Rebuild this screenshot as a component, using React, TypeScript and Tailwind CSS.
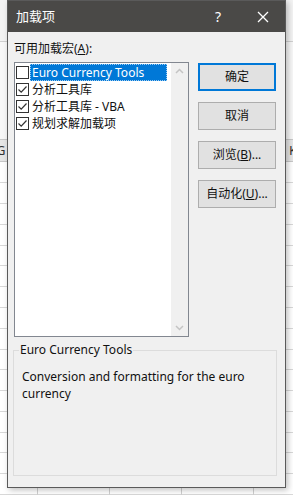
import React from 'react';

const FONT = '"Noto Sans", "Noto Sans CJK SC", sans-serif';

function Check({ checked }: { checked: boolean }) {
  return (
    <div className="w-[13px] h-[13px] border border-[#333] bg-white flex items-center justify-center shrink-0">
      {checked && (
        <svg width="11" height="11" viewBox="0 0 11 11">
          <path d="M1.5 5.5 L4.2 8.2 L9.5 2.5" fill="none" stroke="#333" strokeWidth="1.2" />
        </svg>
      )}
    </div>
  );
}

function Btn({ label, focused }: { label: React.ReactNode; focused?: boolean }) {
  return (
    <div
      className={`w-[78px] h-[28px] flex items-center justify-center text-[12px] text-[#111] ${
        focused ? 'border-2 border-[#0078d7] bg-[#e1e1e1]' : 'border border-[#adadad] bg-[#e1e1e1]'
      }`}
    >
      {label}
    </div>
  );
}

const items = [
  { label: 'Euro Currency Tools', checked: false, selected: true },
  { label: '分析工具库', checked: true },
  { label: '分析工具库 - VBA', checked: true },
  { label: '规划求解加载项', checked: true },
];

export default function App() {
  return (
    <div className="relative w-[293px] h-[495px] overflow-hidden bg-white" style={{ fontFamily: FONT }}>
      {/* spreadsheet behind the dialog */}
      <div className="absolute inset-0 flex flex-col">
        <div className="h-[42px] bg-[#f3f3f3] border-b border-[#d0d0d0]" />
        <div className="h-[98px] bg-[#f7f7f7]" />
        <div className="h-[24px] bg-[#e6e6e6] border-y border-[#c8c8c8] flex justify-between items-center text-[13px] text-[#333] px-[0px]">
          <span className="-ml-[4px]">G</span>
          <span className="-mr-[4px]">K</span>
        </div>
        {Array.from({ length: 16 }).map((_, i) => (
          <div key={i} className="h-[21px] border-b border-[#d8d8d8] bg-white" />
        ))}
      </div>
      <div className="absolute left-[37px] top-[488px] w-px h-[10px] bg-[#d0d0d0]" />
      <div className="absolute left-[109px] top-[488px] w-px h-[10px] bg-[#d0d0d0]" />
      <div className="absolute left-[181px] top-[488px] w-px h-[10px] bg-[#d0d0d0]" />
      <div className="absolute left-[253px] top-[488px] w-px h-[10px] bg-[#d0d0d0]" />

      {/* dialog */}
      <div className="absolute left-[7px] top-0 w-[279px] h-[488px] border border-[#5a5a5a] bg-[#f0f0f0] shadow-[2px_2px_6px_rgba(0,0,0,0.25)] flex flex-col">
        <div className="h-[31px] bg-[#4a4947] flex items-center text-white shrink-0">
          <span className="ml-[8px] text-[13px]">加载项</span>
          <span className="ml-auto mr-[36px] text-[14px]">?</span>
          <svg className="mr-[16px]" width="12" height="12" viewBox="0 0 12 12">
            <path d="M1 1 L11 11 M11 1 L1 11" stroke="#fff" strokeWidth="1.3" />
          </svg>
        </div>

        <div className="flex flex-col pl-[6px] pr-[7px]">
          <div className="mt-[10px] h-[14px] leading-[14px] text-[12px] text-[#111]">
            可用加载宏(<span className="underline">A</span>):
          </div>

          <div className="flex mt-[6px] gap-[9px]">
            <div className="w-[175px] h-[275px] border border-[#828790] bg-white flex shrink-0">
              <div className="flex-1 flex flex-col pt-[1px]">
                {items.map((it) => (
                  <div key={it.label} className="h-[17px] flex items-center">
                    <div className="ml-[1px]">
                      <Check checked={it.checked} />
                    </div>
                    <div
                      className={`ml-[1px] h-[17px] flex items-center text-[12px] pl-[2px] ${
                        it.selected
                          ? 'bg-[#0078d7] text-white w-[137px] outline outline-1 outline-dotted outline-[#9ccbf3] -outline-offset-1'
                          : 'text-[#111]'
                      }`}
                    >
                      {it.label}
                    </div>
                  </div>
                ))}
              </div>
              <div className="w-[17px] bg-[#f0f0f0] flex flex-col justify-between items-center py-[5px]">
                <svg width="9" height="6" viewBox="0 0 9 6">
                  <path d="M1 5 L4.5 1.5 L8 5" fill="none" stroke="#c4c4c4" strokeWidth="1.5" />
                </svg>
                <svg width="9" height="6" viewBox="0 0 9 6">
                  <path d="M1 1 L4.5 4.5 L8 1" fill="none" stroke="#c4c4c4" strokeWidth="1.5" />
                </svg>
              </div>
            </div>

            <div className="flex flex-col gap-[11px] mt-[1px]">
              <Btn label="确定" focused />
              <Btn label="取消" />
              <Btn label={<span>浏览(<span className="underline">B</span>)...</span>} />
              <Btn label={<span>自动化(<span className="underline">U</span>)...</span>} />
            </div>
          </div>

          <div className="relative mt-[13px] -ml-[1px] w-[264px] h-[126px] border border-[#dcdcdc]">
            <div className="absolute -top-[9px] left-[5px] bg-[#f0f0f0] px-[1px] text-[12px] leading-[16px] text-[#111]">
              Euro Currency Tools
            </div>
            <div className="mt-[17px] ml-[8px] text-[12px] leading-[17px] text-[#111] w-[240px]">
              Conversion and formatting for the euro currency
            </div>
          </div>
        </div>
      </div>
    </div>
  );
}
